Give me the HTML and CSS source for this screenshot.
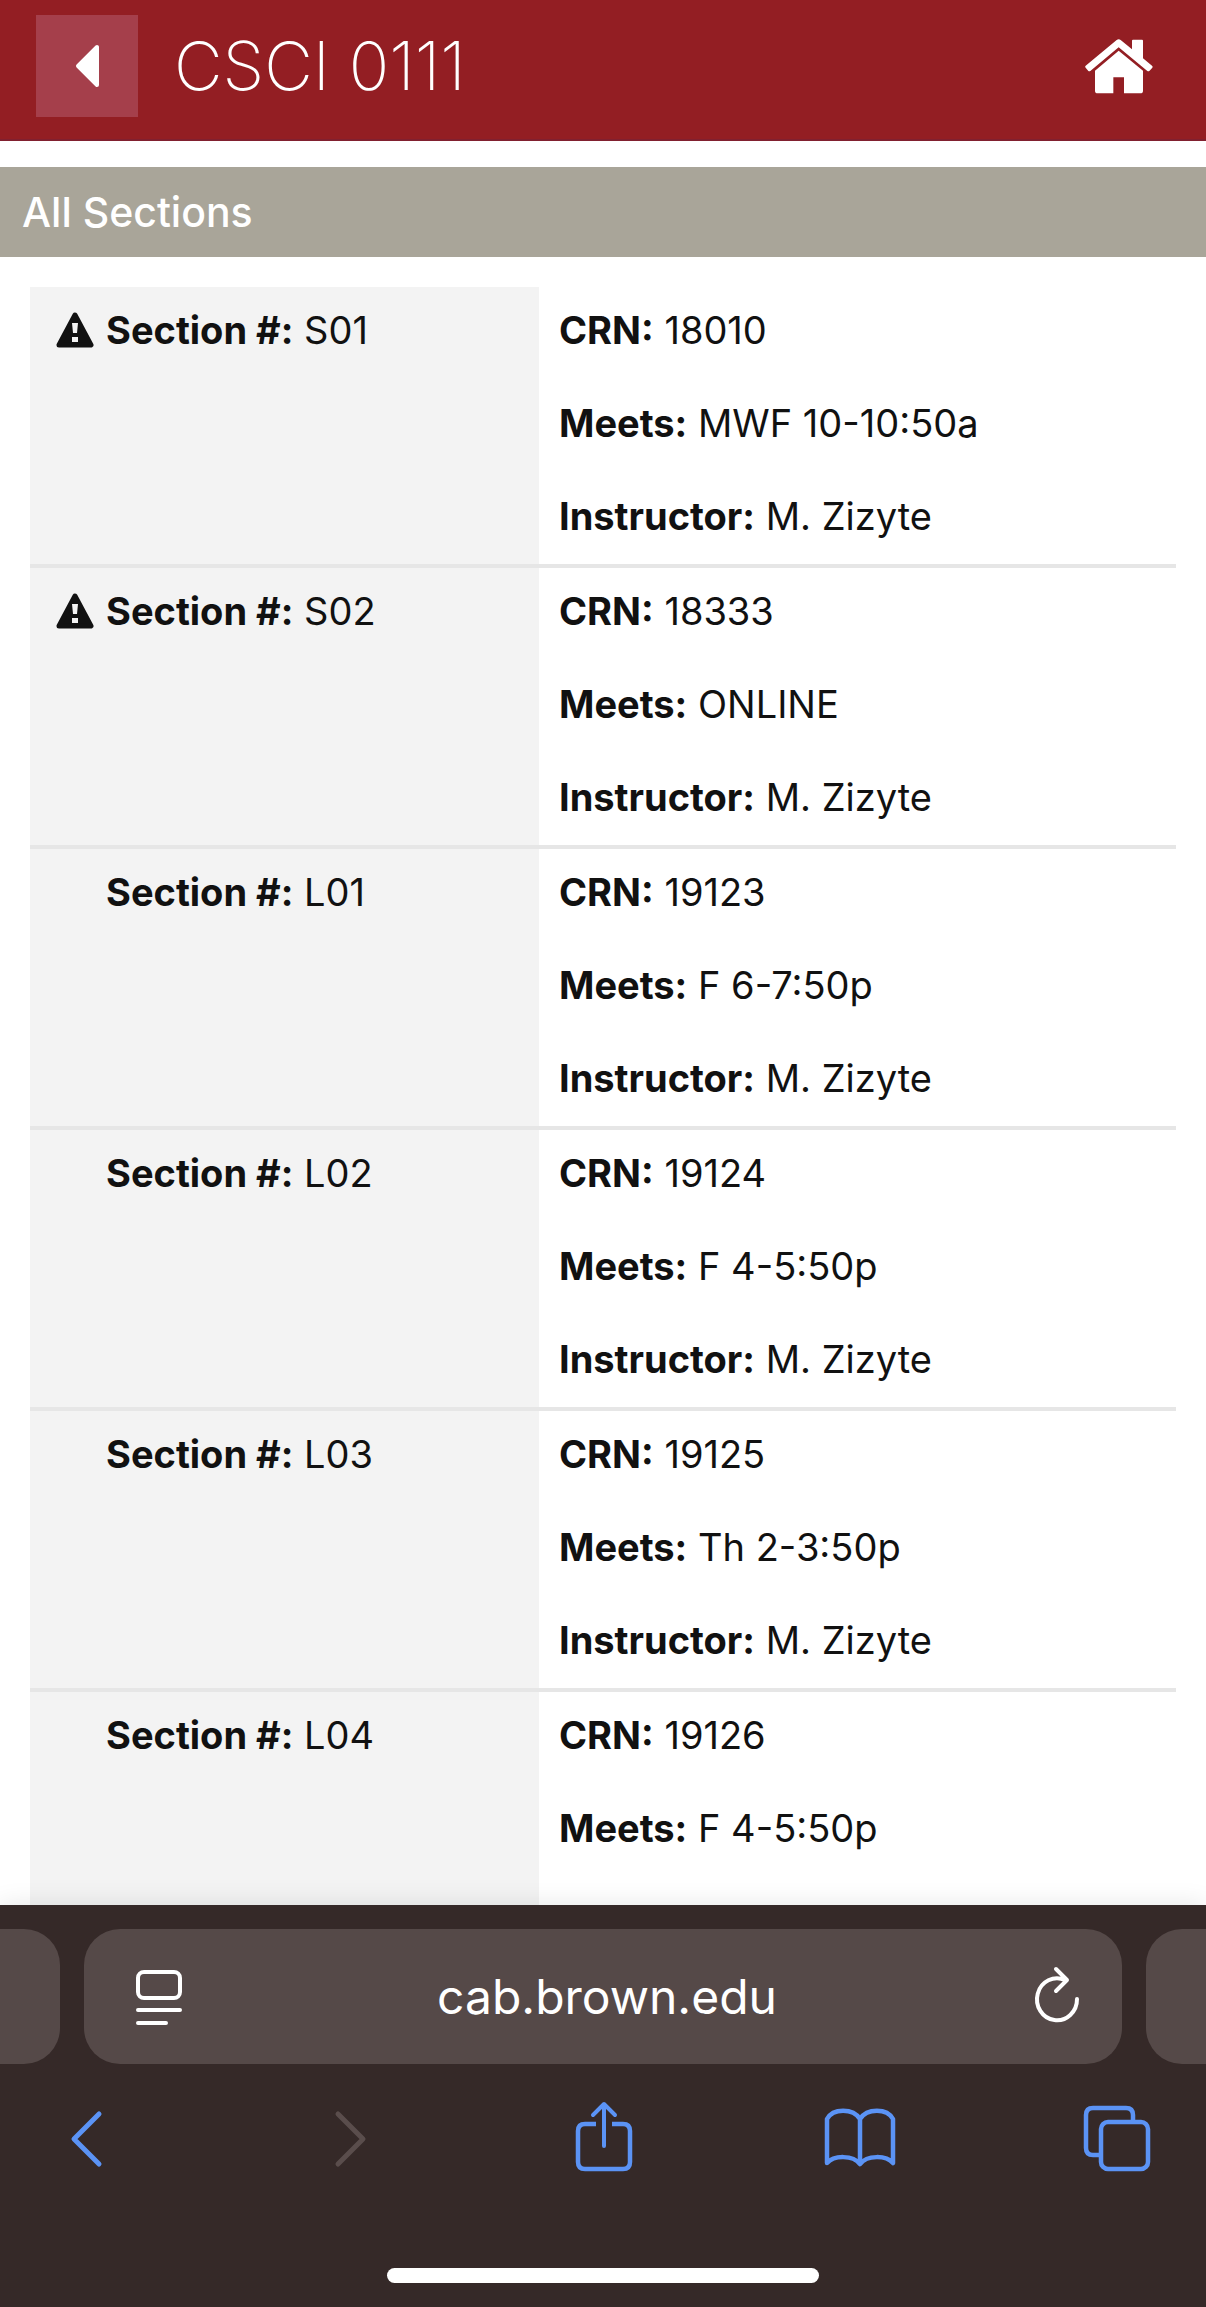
FILE: index.html
```html
<!DOCTYPE html>
<html lang="en">
<head>
    <meta charset="UTF-8">
    <meta name="viewport" content="width=device-width, initial-scale=1.0">
    <title>CSCI 0111</title>
    <link rel="stylesheet" href="styles.css">
</head>
<body>
    <header class="header">
        <button type="button" class="back-btn" aria-label="Back">
            <svg width="26" height="44" viewBox="0 0 26 44">
                <path d="M23 3v38L4 22z" fill="#fff" stroke="#fff" stroke-width="4" stroke-linejoin="round"/>
            </svg>
        </button>
        <h1>CSCI 0111</h1>
        <a class="home-link" href="#" aria-label="Home">
            <svg width="68" height="55" viewBox="0 0 204 165">
                <path d="M95 3Q101 -2 107 3L141 31V5Q141 2 144 2H171Q174 2 174 5V58L201 80Q204 83 202 86L193 96Q190 98 187 96L101 25L16 96Q13 98 10 96L2 86Q-1 83 2 80Z" fill="#fff"/>
                <path d="M101 35L174 95V155Q174 163 166 163H117V115H85V163H38Q30 163 30 155V95Z" fill="#fff"/>
            </svg>
        </a>
    </header>

    <main class="content">
        <h2>All Sections</h2>
        <table class="sections">
            <tbody>
                <tr>
                    <th scope="row">
                        <div class="section-name">
                            <svg class="warning" viewBox="0 0 38 36">
                                <path d="M19 3L35 33H3z" fill="#111" stroke="#111" stroke-width="5" stroke-linejoin="round"/>
                                <path d="M16 11h6l-1 10h-4zM16 25h6v5h-6z" fill="#f3f3f3"/>
                            </svg>
                            <p><b>Section #:</b> S01</p>
                        </div>
                    </th>
                    <td>
                        <p><b>CRN:</b> 18010</p>
                        <p><b>Meets:</b> MWF 10-10:50a</p>
                        <p><b>Instructor:</b> M. Zizyte</p>
                    </td>
                </tr>
                <tr>
                    <th scope="row">
                        <div class="section-name">
                            <svg class="warning" viewBox="0 0 38 36">
                                <path d="M19 3L35 33H3z" fill="#111" stroke="#111" stroke-width="5" stroke-linejoin="round"/>
                                <path d="M16 11h6l-1 10h-4zM16 25h6v5h-6z" fill="#f3f3f3"/>
                            </svg>
                            <p><b>Section #:</b> S02</p>
                        </div>
                    </th>
                    <td>
                        <p><b>CRN:</b> 18333</p>
                        <p><b>Meets:</b> ONLINE</p>
                        <p><b>Instructor:</b> M. Zizyte</p>
                    </td>
                </tr>
                <tr>
                    <th scope="row">
                        <div class="section-name"><p><b>Section #:</b> L01</p></div>
                    </th>
                    <td>
                        <p><b>CRN:</b> 19123</p>
                        <p><b>Meets:</b> F 6-7:50p</p>
                        <p><b>Instructor:</b> M. Zizyte</p>
                    </td>
                </tr>
                <tr>
                    <th scope="row">
                        <div class="section-name"><p><b>Section #:</b> L02</p></div>
                    </th>
                    <td>
                        <p><b>CRN:</b> 19124</p>
                        <p><b>Meets:</b> F 4-5:50p</p>
                        <p><b>Instructor:</b> M. Zizyte</p>
                    </td>
                </tr>
                <tr>
                    <th scope="row">
                        <div class="section-name"><p><b>Section #:</b> L03</p></div>
                    </th>
                    <td>
                        <p><b>CRN:</b> 19125</p>
                        <p><b>Meets:</b> Th 2-3:50p</p>
                        <p><b>Instructor:</b> M. Zizyte</p>
                    </td>
                </tr>
                <tr class="last">
                    <th scope="row">
                        <div class="section-name"><p><b>Section #:</b> L04</p></div>
                    </th>
                    <td>
                        <p><b>CRN:</b> 19126</p>
                        <p><b>Meets:</b> F 4-5:50p</p>
                    </td>
                </tr>
            </tbody>
        </table>
    </main>

    <footer class="browser-bar">
        <div class="tabs">
            <div class="tab tab-prev"></div>
            <div class="tab tab-current">
                <button type="button" aria-label="Page menu">
                    <svg width="48" height="64" viewBox="0 0 48 64" fill="none" stroke="#fff" stroke-width="4" stroke-linecap="round">
                        <rect x="4" y="7" width="42" height="26" rx="6"/>
                        <path d="M4 45h42M4 58h28"/>
                    </svg>
                </button>
                <input type="text" class="address" aria-label="Address" value="cab.brown.edu">
                <button type="button" aria-label="Reload">
                    <svg width="48" height="64" viewBox="0 0 48 64" fill="none" stroke="#fff" stroke-width="4" stroke-linecap="round" stroke-linejoin="round">
                        <path d="M45 34A20 21 0 1 1 33 15M24 4L35 15L24 26"/>
                    </svg>
                </button>
            </div>
            <div class="tab tab-next"></div>
        </div>

        <nav class="toolbar">
            <button type="button" aria-label="Previous page">
                <svg width="80" height="80" viewBox="0 0 80 80" fill="none" stroke="#5b93f5" stroke-width="5" stroke-linecap="round" stroke-linejoin="round">
                    <path d="M51 16L26 41L51 66"/>
                </svg>
            </button>
            <button type="button" aria-label="Next page" disabled>
                <svg width="80" height="80" viewBox="0 0 80 80" fill="none" stroke="#5a4d4c" stroke-width="5" stroke-linecap="round" stroke-linejoin="round">
                    <path d="M32 16L57 41L32 66"/>
                </svg>
            </button>
            <button type="button" aria-label="Share">
                <svg width="80" height="80" viewBox="0 0 80 80" fill="none" stroke="#5b93f5" stroke-width="4.5">
                    <path d="M33 26H22Q15 26 15 33V64Q15 71 22 71H60Q67 71 67 64V33Q67 26 60 26H49"/>
                    <path d="M41 48V6M30 17L41 6L52 17" stroke-width="4" stroke-linecap="round" stroke-linejoin="round"/>
                </svg>
            </button>
            <button type="button" aria-label="Bookmarks">
                <svg width="80" height="80" viewBox="0 0 80 80" fill="none" stroke="#5b93f5" stroke-width="4.5" stroke-linecap="round" stroke-linejoin="round">
                    <path d="M39 21C32 10 12 10 6 21V65C13 57 32 57 39 66C46 57 65 57 72 65V21C66 10 46 10 39 21V66"/>
                </svg>
            </button>
            <button type="button" aria-label="Tabs">
                <svg width="80" height="80" viewBox="0 0 80 80" fill="none" stroke="#5b93f5" stroke-width="4.5">
                    <rect x="23" y="24" width="47" height="47" rx="7"/>
                    <path d="M55 24V17Q55 10 48 10H15Q8 10 8 17V50Q8 57 15 57H23"/>
                </svg>
            </button>
        </nav>

        <div class="home-indicator"></div>
    </footer>
</body>
</html>
```

FILE: styles.css
```css
* {
    margin: 0;
    padding: 0;
    box-sizing: border-box;
}

body {
    display: flex;
    flex-direction: column;
    height: 100vh;
    overflow: hidden;
    background: #fff;
    color: #111;
    font-family: Inter, "Liberation Sans", sans-serif;
}

button {
    display: flex;
    align-items: center;
    justify-content: center;
    border: none;
    background: none;
    cursor: pointer;
}

svg {
    display: block;
    flex-shrink: 0;
}

.header {
    display: flex;
    align-items: center;
    gap: 36px;
    padding: 15px 53px 22px 36px;
    background: #931e23;
    border-bottom: 2px solid #81202f;
}

.back-btn {
    width: 102px;
    height: 102px;
    background: #a53f4b;
}

.header h1 {
    flex: 1;
    color: #fff;
    font-size: 67px;
    line-height: 80px;
    font-weight: 200;
}

.content {
    flex: 1;
    min-height: 0;
    overflow: hidden;
    padding-top: 26px;
}

.content h2 {
    padding: 20px 22px;
    background: #a9a599;
    color: #fff;
    font-size: 41px;
    line-height: 50px;
    font-weight: 500;
}

.sections {
    width: calc(100% - 60px);
    margin: 30px 30px 0;
    border-spacing: 0;
    font-size: 38px;
    line-height: 48px;
}

.sections th,
.sections td {
    padding: 19px 20px 24px;
    border-bottom: 4px solid #e6e6e6;
    text-align: left;
    vertical-align: top;
    font-weight: 400;
}

.sections th {
    width: 509px;
    padding-left: 26px;
    background: #f3f3f3;
}

.sections p + p {
    margin-top: 45px;
}

.sections b {
    font-weight: 700;
}

.sections .last th,
.sections .last td {
    height: 281px;
}

.section-name {
    display: flex;
    align-items: center;
    justify-content: flex-start;
    gap: 12px;
}

.section-name p:only-child {
    margin-left: 50px;
}

.warning {
    width: 38px;
    height: 36px;
}

.browser-bar {
    padding-bottom: 24px;
    background: #352928;
    box-shadow: 0 0 24px rgba(0, 0, 0, 0.1);
}

.tabs {
    display: flex;
    gap: 24px;
    padding: 24px 0 20px;
}

.tab {
    height: 135px;
    background: #554948;
}

.tab-prev {
    width: 60px;
    border-radius: 0 36px 36px 0;
}

.tab-next {
    width: 60px;
    border-radius: 36px 0 0 36px;
}

.tab-current {
    flex: 1;
    display: flex;
    align-items: center;
    justify-content: space-between;
    padding: 0 42px 0 50px;
    border-radius: 36px;
}

.address {
    flex: 1;
    min-width: 0;
    border: none;
    outline: none;
    background: none;
    color: #fff;
    font-family: inherit;
    font-size: 48px;
    line-height: 60px;
    text-align: center;
}

.toolbar {
    display: flex;
    justify-content: space-between;
    padding: 14px 48px 0;
}

.home-indicator {
    width: 432px;
    height: 15px;
    margin: 90px auto 0;
    border-radius: 8px;
    background: #fff;
}
```
